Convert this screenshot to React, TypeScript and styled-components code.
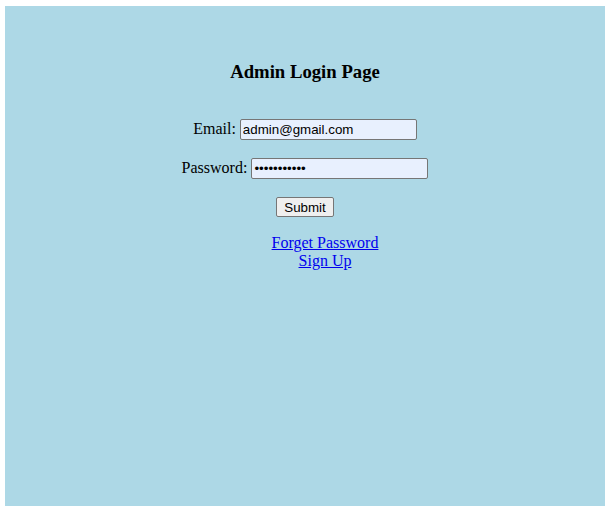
import React from "react";
import styled, { createGlobalStyle } from "styled-components";

const GlobalStyle = createGlobalStyle`
  html, body {
    margin: 0;
    padding: 0;
    background: #ffffff;
  }
  body {
    font-family: "Liberation Serif", "Times New Roman", serif;
    font-size: 16px;
    color: #000;
  }
`;

const Panel = styled.div`
  box-sizing: border-box;
  width: 600px;
  height: 500px;
  margin: 6px 0 0 5px;
  background: #add8e6;
  padding-top: 55px;
  display: flex;
  flex-direction: column;
  align-items: center;
`;

const Title = styled.h3`
  margin: 0 0 36px;
  font-size: 18.72px;
  font-weight: bold;
  font-family: "Liberation Serif", "Times New Roman", serif;
`;

const Form = styled.form`
  display: flex;
  flex-direction: column;
  align-items: center;
  gap: 18px;
`;

const Row = styled.div`
  display: flex;
  align-items: baseline;
  gap: 4px;
`;

const Label = styled.label`
  font-family: "Liberation Serif", "Times New Roman", serif;
  font-size: 16px;
`;

const Input = styled.input`
  box-sizing: border-box;
  width: 177px;
  height: 21px;
  padding: 1px 2px;
  border: 1px solid #767676;
  border-radius: 2px;
  background: #e8f0fe;
  font-family: "Liberation Sans", Arial, sans-serif;
  font-size: 13.33px;
  color: #000;
  outline: none;
`;

const Button = styled.button`
  box-sizing: border-box;
  width: 58px;
  height: 20px;
  padding: 0 6px;
  border: 1px solid #767676;
  border-radius: 2px;
  background: #efefef;
  font-family: "Liberation Sans", Arial, sans-serif;
  font-size: 13.33px;
  color: #000;
`;

const Links = styled.div`
  margin-top: 17px;
  padding-left: 40px;
  display: flex;
  flex-direction: column;
  align-items: center;
  line-height: 18px;
`;

const Link = styled.a`
  color: #0000ee;
  text-decoration: underline;
  font-family: "Liberation Serif", "Times New Roman", serif;
  font-size: 16px;
`;

export default function App() {
  return (
    <>
      <GlobalStyle />
      <Panel>
        <Title>Admin Login Page</Title>
        <Form onSubmit={(e) => e.preventDefault()}>
          <Row>
            <Label htmlFor="email">Email:</Label>
            <Input id="email" type="text" defaultValue="admin@gmail.com" />
          </Row>
          <Row>
            <Label htmlFor="password">Password:</Label>
            <Input id="password" type="password" defaultValue="admin123456" />
          </Row>
          <Button type="submit">Submit</Button>
        </Form>
        <Links>
          <Link href="#">Forget Password</Link>
          <Link href="#">Sign Up</Link>
        </Links>
      </Panel>
    </>
  );
}
